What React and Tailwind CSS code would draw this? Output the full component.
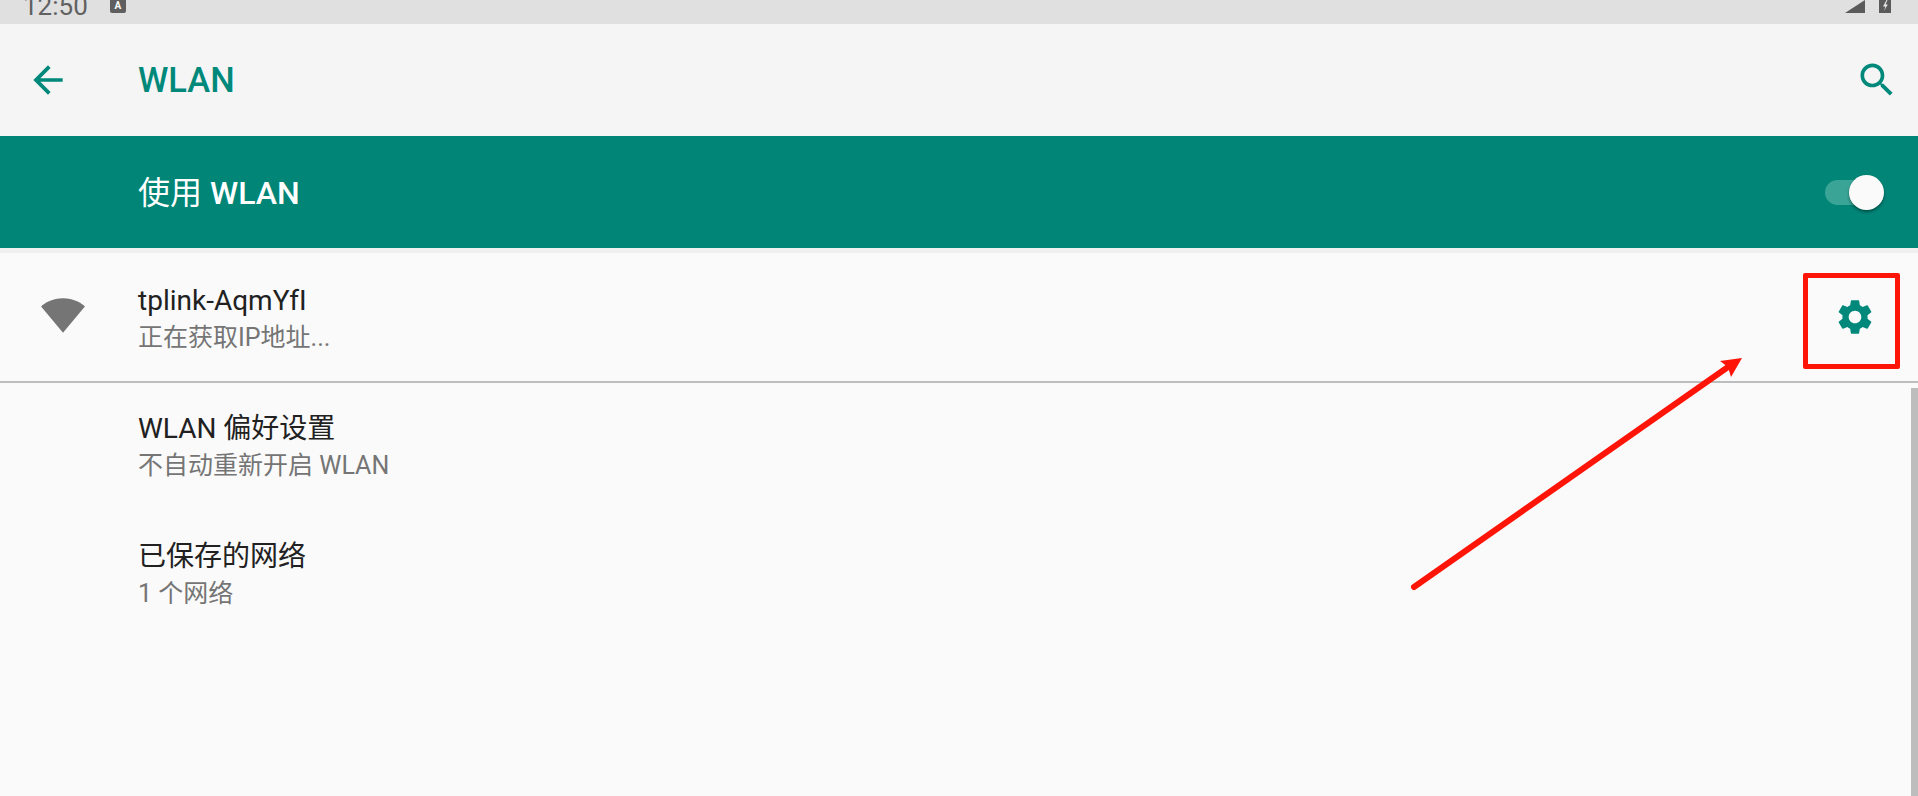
const GearIcon = ({ className }) => (
  <svg viewBox="0 0 24 24" className={className} fill="currentColor">
    <path d="M19.14 12.94c.04-.3.06-.61.06-.94 0-.32-.02-.64-.07-.94l2.03-1.58c.18-.14.23-.41.12-.61l-1.92-3.32c-.12-.22-.37-.29-.59-.22l-2.39.96c-.5-.38-1.03-.7-1.62-.94l-.36-2.54c-.04-.24-.24-.41-.48-.41h-3.84c-.24 0-.43.17-.47.41l-.36 2.54c-.59.24-1.13.57-1.62.94l-2.39-.96c-.22-.08-.47 0-.59.22L2.74 8.87c-.12.21-.08.47.12.61l2.03 1.58c-.05.3-.09.63-.09.94s.02.64.07.94l-2.03 1.58c-.18.14-.23.41-.12.61l1.92 3.32c.12.22.37.29.59.22l2.39-.96c.5.38 1.03.7 1.62.94l.36 2.54c.05.24.24.41.48.41h3.84c.24 0 .44-.17.47-.41l.36-2.54c.59-.24 1.13-.56 1.62-.94l2.39.96c.22.08.47 0 .59-.22l1.92-3.32c.12-.22.07-.47-.12-.61l-2.01-1.58zM12 15.6c-1.98 0-3.6-1.62-3.6-3.6s1.62-3.6 3.6-3.6 3.6 1.62 3.6 3.6-1.62 3.6-3.6 3.6z" />
  </svg>
);

const ListRow = ({ title, summary, className }) => (
  <div className={`flex flex-col justify-center pl-[138px] ${className}`}>
    <p className="text-[28px] leading-[37px] text-[#212121]">{title}</p>
    <p className="text-[25px] leading-[37px] text-[#757575]">{summary}</p>
  </div>
);

const StatusBar = () => (
  <div className="h-6 shrink-0 bg-[#e0e0e0] flex items-end justify-between overflow-hidden pb-[11px]">
    <div className="flex items-end pl-[23px]">
      <span className="text-[26px] leading-[28px] text-[#616161] -mb-[7px]">12:50</span>
      <div className="ml-[22px] w-[16px] h-[24px] rounded-[2px] bg-[#5f5f5f] text-white text-[10px] leading-[34px] font-bold text-center overflow-hidden">A</div>
    </div>
    <div className="flex items-end pr-[27px]">
      <svg viewBox="0 0 20 13" className="w-5 h-[13px] text-[#5a5a5a]" fill="currentColor">
        <path d="M0 13 20 0v13z" />
      </svg>
      <svg viewBox="0 0 12 13" className="ml-[14px] w-3 h-[13px]">
        <path d="M0 0h12v13H0z" fill="#5a5a5a" />
        <path d="M7.5 0 4 6.5h2.5L5 11l3.8-6.5H6.5L8.5 0z" fill="#e8e8e8" />
      </svg>
    </div>
  </div>
);

const App = () => {
  return (
    <div className="relative w-full h-[796px] overflow-hidden bg-[#fafafa] flex flex-col font-['Roboto','Noto_Sans_CJK_SC',sans-serif]">
      <StatusBar />

      <header className="h-[112px] shrink-0 bg-[#f5f5f5] flex items-center justify-between text-[#00897b]">
        <div className="flex items-center">
          <svg viewBox="0 0 24 24" className="ml-[26px] w-11 h-11" fill="currentColor">
            <path d="M20 11H7.83l5.59-5.59L12 4l-8 8 8 8 1.41-1.41L7.83 13H20v-2z" />
          </svg>
          <h1 className="ml-[68px] text-[34.5px] leading-none font-medium">WLAN</h1>
        </div>
        <svg viewBox="0 0 24 24" className="mr-[19px] w-11 h-11" fill="currentColor">
          <path d="M15.5 14h-.79l-.28-.27C15.41 12.59 16 11.11 16 9.5 16 5.91 13.09 3 9.5 3S3 5.91 3 9.5 5.91 16 9.5 16c1.61 0 3.09-.59 4.23-1.57l.27.28v.79l5 4.99L20.49 19l-4.99-5zm-6 0C7.01 14 5 11.99 5 9.5S7.01 5 9.5 5 14 7.01 14 9.5 11.99 14 9.5 14z" />
        </svg>
      </header>

      <div className="h-[112px] shrink-0 bg-[#008577] flex items-center justify-between pl-[138px] pr-[34px]">
        <span className="text-[32px] text-white font-medium pt-[2px]">
          <span className="font-normal">使用</span> WLAN
        </span>
        <div className="relative w-[59px] h-[25px] rounded-full bg-[#3aa597]">
          <div className="absolute right-0 -top-[5px] w-[35px] h-[35px] rounded-full bg-[#fafafa] shadow-[0_2px_3px_rgba(0,0,0,0.4)]" />
        </div>
      </div>

      <div className="h-[5px] shrink-0 bg-[#f0f0f0]" />

      <div className="h-[130px] shrink-0 flex items-center border-b-2 border-[#bdbdbd]">
        <svg viewBox="0 0 24 24" className="ml-[38px] w-[50px] h-[50px] text-[#757575]" fill="currentColor">
          <path d="M12 19.5 1.5 6.9C3.2 5.3 7 3 12 3s8.8 2.3 10.5 3.9z" />
        </svg>
        <ListRow className="-ml-[88px] flex-1 pt-[3px]" title="tplink-AqmYfI" summary="正在获取IP地址..." />
        <GearIcon className="mr-[42px] w-[42px] h-[42px] text-[#00897b]" />
      </div>

      <ListRow className="h-[128px] shrink-0" title="WLAN 偏好设置" summary="不自动重新开启 WLAN" />
      <ListRow className="h-[128px] shrink-0" title="已保存的网络" summary="1 个网络" />

      {/* screenshot annotations */}
      <div className="absolute left-[1803px] top-[273px] w-[97px] h-[96px] border-[5px] border-[#ff1408] rounded-[2px]" />
      <svg className="absolute left-0 top-0 w-[1918px] h-[796px] pointer-events-none" viewBox="0 0 1918 796" fill="none">
        <path d="M1414 587 1728 367" stroke="#ff1408" strokeWidth="6" strokeLinecap="round" />
        <path d="M1742 358 1720 361 1728 367 1731 377z" fill="#ff1408" />
      </svg>

      {/* scrollbar */}
      <div className="absolute right-0 top-[388px] bottom-0 w-[7px] bg-[#bdbdbd]" />
    </div>
  );
};

export default App;
